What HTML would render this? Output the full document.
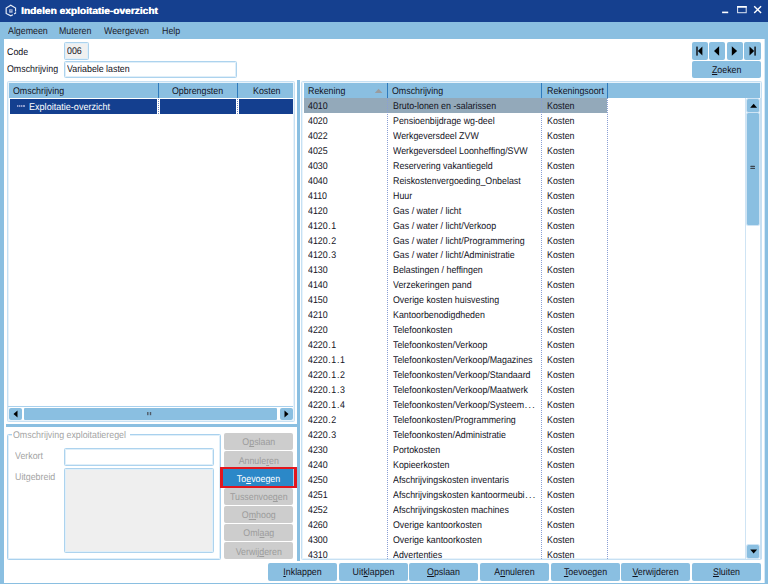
<!DOCTYPE html>
<html><head><meta charset="utf-8"><style>
html,body{margin:0;padding:0;width:768px;height:584px;overflow:hidden;background:#fff;position:relative}
div{position:absolute;box-sizing:content-box}
.t{font-family:"Liberation Sans",sans-serif;font-size:9.75px;line-height:11px;color:#12121c;white-space:nowrap;transform:scaleX(0.906);transform-origin:0 0;text-rendering:geometricPrecision}
.b{background:#8abfe1;border-radius:2px}
.bl{left:0;right:0;text-align:center;font-family:"Liberation Sans",sans-serif;font-size:9.75px;line-height:11px;color:#12121c;white-space:nowrap;transform:scaleX(0.906);text-rendering:geometricPrecision}
.dis{background:#cdcdcd}
.dis .bl{color:#9c9c9c}
.box{border:1px solid #add3ee;border-radius:1.5px;box-shadow:inset 0 0 0 1px #e0eff9}
u{text-decoration:underline;text-decoration-skip-ink:none}
.dot{margin:0 0.7px}
</style></head><body>
<div style="left:0;top:0;width:768px;height:22px;background:#15408f"></div>
<svg style="position:absolute;left:0;top:0" width="22" height="22" viewBox="0 0 22 22">
<path d="M12.9 14.7 L10.78 15.87 L6.16 13.4 L6.16 8.01 L10.78 5.24 L15.56 8.01 L15.56 11.4" fill="none" stroke="#e8edf7" stroke-width="1.15"/>
<path d="M14.1 13.95 L15.56 13.1 L15.56 12.2" fill="none" stroke="#e8edf7" stroke-width="1.15"/>
<rect x="9.1" y="9.25" width="3.5" height="3.5" fill="#a3b3d8"/>
<path d="M9.9 10.1 L10.85 10.8 L11.8 10.1" fill="none" stroke="#4a68a8" stroke-width="0.6"/>
</svg>
<div class="t" style="left:21px;top:5.82px;font-weight:bold;color:#fff;transform:scaleX(1.043);text-shadow:0.3px 0 0 #fff">Indelen exploitatie-overzicht</div>
<svg style="position:absolute;left:716px;top:0" width="52" height="22" viewBox="716 0 52 22">
<rect x="722.1" y="11.6" width="6.1" height="1.6" fill="#fff"/>
<rect x="737.6" y="6.6" width="8.6" height="6.1" fill="none" stroke="#dfe6f3" stroke-width="1"/>
<rect x="737.1" y="6" width="9.6" height="1.7" fill="#fff"/>
<path d="M754.2 6.3 L761.1 12.9 M761.1 6.3 L754.2 12.9" stroke="#fff" stroke-width="1.4"/>
</svg>
<div style="left:0;top:22px;width:768px;height:17px;background:#8abfe1"></div>
<div class="t" style="left:8px;top:25.82px;color:#1b1b2a;">Algemeen</div>
<div class="t" style="left:58.9px;top:25.82px;color:#1b1b2a;">Muteren</div>
<div class="t" style="left:103.9px;top:25.82px;color:#1b1b2a;">Weergeven</div>
<div class="t" style="left:161.7px;top:25.82px;color:#1b1b2a;">Help</div>
<div style="left:0;top:39px;width:4px;height:545px;background:#8abfe1"></div>
<div style="left:765px;top:39px;width:3px;height:545px;background:#8abfe1"></div>
<div style="left:764px;top:39px;width:1px;height:545px;background:#d7e9f5"></div>
<div style="left:0;top:583px;width:768px;height:1px;background:#8abfe1"></div>
<div class="t" style="left:7.25px;top:46.62px;">Code</div>
<div class="box" style="left:64px;top:42px;width:23px;height:16px;background:#f0f0f0"></div>
<div class="t" style="left:67.2px;top:46.22px;">006</div>
<div class="t" style="left:7.25px;top:64.42px;">Omschrijving</div>
<div class="box" style="left:64px;top:61px;width:171px;height:15px;background:#fff"></div>
<div class="t" style="left:67.4px;top:64.12px;">Variabele lasten</div>
<div class="b" style="left:691.6px;top:42.2px;width:16.2px;height:17.4px"></div>
<div class="b" style="left:709.1px;top:42.2px;width:16px;height:17.4px"></div>
<div class="b" style="left:726.9px;top:42.2px;width:15.9px;height:17.4px"></div>
<div class="b" style="left:744.2px;top:42.2px;width:16.6px;height:17.4px"></div>
<svg style="position:absolute;left:680px;top:40px" width="88" height="22" viewBox="680 40 88 22">
<rect x="696.1" y="46.6" width="1.8" height="9" fill="#26313b"/><path d="M702.4 46.5 L697.9 51 L702.4 55.5 Z" fill="#000"/>
<path d="M719.1 46.3 L714 51 L719.1 55.7 Z" fill="#000"/>
<path d="M731.8 46.3 L737.1 51 L731.8 55.7 Z" fill="#000"/>
<path d="M749.5 46.5 L754.2 51 L749.5 55.5 Z" fill="#000"/><rect x="754.2" y="46.6" width="1.8" height="9" fill="#26313b"/>
</svg>
<div class="b" style="left:691.6px;top:61.1px;width:69.4px;height:16.7px;"><div class="bl" style="top:3.82px;"><u>Z</u>oeken</div></div>
<div class="box" style="left:7px;top:81px;width:286px;height:339px;background:#fff;border-color:#c6e0f3;box-shadow:inset 0 0 0 1px #e8f3fb"></div>
<div style="left:9px;top:83px;width:284px;height:15px;background:#8abfe1"></div>
<div style="left:158px;top:83px;width:1px;height:15px;background:#2f7bbd"></div>
<div style="left:237px;top:83px;width:1px;height:15px;background:#2f7bbd"></div>
<div class="t" style="left:13px;top:86.02px;">Omschrijving</div>
<div class="t" style="left:172px;top:86.02px;">Opbrengsten</div>
<div class="t" style="left:253px;top:86.02px;">Kosten</div>
<div style="left:10px;top:99px;width:147px;height:14.5px;background:#143f8f"></div>
<div style="left:160px;top:99px;width:76px;height:14.5px;background:#143f8f"></div>
<div style="left:239px;top:99px;width:54px;height:14.5px;background:#143f8f"></div>
<div style="left:16.8px;top:105.4px;width:8.4px;height:1.2px;background:repeating-linear-gradient(90deg,#8d9dce 0 1.3px,#4a64a8 1.3px 2.1px)"></div>
<div class="t" style="left:29px;top:102.22px;color:#fff;transform:scaleX(0.93)">Exploitatie-overzicht</div>
<div style="left:158px;top:99px;width:0;height:14.5px;border-left:1px dotted #6f86c0"></div>
<div style="left:237px;top:99px;width:0;height:14.5px;border-left:1px dotted #6f86c0"></div>
<div style="left:8px;top:406px;width:285px;height:1px;background:#a9d1ee"></div>
<div class="b" style="left:9px;top:408px;width:13px;height:12px"></div>
<div class="b" style="left:23.5px;top:408px;width:253px;height:12px;border-radius:1px"></div>
<div class="b" style="left:280px;top:408px;width:13px;height:12px"></div>
<svg style="position:absolute;left:0;top:400px" width="300" height="25" viewBox="0 400 300 25">
<path d="M17.5 410.5 L13.5 414 L17.5 417.5 Z" fill="#000"/>
<path d="M284.5 410.5 L288.5 414 L284.5 417.5 Z" fill="#000"/>
<rect x="147.1" y="412" width="1.4" height="3.2" fill="#4f5a66"/><rect x="149.8" y="412" width="1.4" height="3.2" fill="#4f5a66"/>
</svg>
<div style="left:6px;top:424px;width:291px;height:3px;background:#8abfe1"></div>
<div style="left:297px;top:80px;width:3px;height:481px;background:#8abfe1"></div>
<div class="box" style="left:7.3px;top:433.5px;width:212px;height:124.5px;border-color:#a9d1ee;border-width:1.3px"></div>
<div style="left:12.3px;top:430px;width:118px;height:8px;background:#fff"></div>
<div class="t" style="left:12.85px;top:429.62px;color:#a4a4a4;">Omschrijving exploitatieregel</div>
<div class="t" style="left:14.9px;top:451.42px;color:#a4a4a4;">Verkort</div>
<div class="box" style="left:64px;top:448px;width:148px;height:16px;background:#fff"></div>
<div class="t" style="left:14.9px;top:471.72px;color:#a4a4a4;">Uitgebreid</div>
<div class="box" style="left:64px;top:467.5px;width:148px;height:83px;background:#efefef"></div>
<div class="b dis" style="left:223.6px;top:433.2px;width:69.6px;height:17px;"><div class="bl" style="top:4.22px;">O<u>p</u>slaan</div></div>
<div class="b dis" style="left:223.6px;top:451.4px;width:69.6px;height:17px;"><div class="bl" style="top:4.22px;">Annule<u>r</u>en</div></div>
<div style="left:220px;top:467px;width:71px;height:17px;border-style:solid;border-color:#e3161d;border-width:2px 3px"></div>
<div class="b" style="left:223.2px;top:469.4px;width:71px;height:16.5px;background:#2b88c8;border-radius:0;box-shadow:inset -1px 0 0 #9fd0ee"><div class="bl" style="top:4.32px;color:#fff;">To<u>e</u>voegen</div></div>
<div class="b dis" style="left:223.6px;top:487.8px;width:69.6px;height:17px;"><div class="bl" style="top:4.22px;">Tussenvoe<u>g</u>en</div></div>
<div class="b dis" style="left:223.6px;top:506.0px;width:69.6px;height:17px;"><div class="bl" style="top:4.22px;">O<u>m</u>hoog</div></div>
<div class="b dis" style="left:223.6px;top:524.2px;width:69.6px;height:17px;"><div class="bl" style="top:4.22px;">Oml<u>a</u>ag</div></div>
<div class="b dis" style="left:223.6px;top:542.4px;width:69.6px;height:17px;"><div class="bl" style="top:4.22px;">Verwij<u>d</u>eren</div></div>
<div class="box" style="left:301px;top:81px;width:459px;height:477px;background:#fff;border-color:#c6e0f3;box-shadow:inset 0 0 0 1px #e8f3fb"></div>
<div style="left:304px;top:83px;width:456px;height:15px;background:#8abfe1"></div>
<div style="left:387px;top:83px;width:1px;height:15px;background:#2f7bbd"></div>
<div style="left:541px;top:83px;width:1px;height:15px;background:#2f7bbd"></div>
<div style="left:607px;top:83px;width:1px;height:15px;background:#2f7bbd"></div>
<div class="t" style="left:308px;top:86.02px;">Rekening</div>
<svg style="position:absolute;left:370px;top:85px" width="16" height="10" viewBox="370 85 16 10"><path d="M374.8 92.9 L378.6 88.8 L382.4 92.9 Z" fill="#9a9c9e"/></svg>
<div class="t" style="left:392px;top:86.02px;">Omschrijving</div>
<div class="t" style="left:547px;top:86.02px;">Rekeningsoort</div>
<div style="left:304px;top:98px;width:303px;height:15px;background:#93a9ba"></div>
<div style="left:303px;top:98px;width:443px;height:461px;overflow:hidden">
<div class="t" style="left:5px;top:2.92px;">4010</div>
<div class="t" style="left:89.7px;top:2.92px;">Bruto-lonen en -salarissen</div>
<div class="t" style="left:244px;top:2.92px;">Kosten</div>
<div class="t" style="left:5px;top:17.88px;">4020</div>
<div class="t" style="left:89.7px;top:17.88px;">Pensioenbijdrage wg-deel</div>
<div class="t" style="left:244px;top:17.88px;">Kosten</div>
<div class="t" style="left:5px;top:32.83px;">4022</div>
<div class="t" style="left:89.7px;top:32.83px;">Werkgeversdeel ZVW</div>
<div class="t" style="left:244px;top:32.83px;">Kosten</div>
<div class="t" style="left:5px;top:47.79px;">4025</div>
<div class="t" style="left:89.7px;top:47.79px;">Werkgeversdeel Loonheffing/SVW</div>
<div class="t" style="left:244px;top:47.79px;">Kosten</div>
<div class="t" style="left:5px;top:62.75px;">4030</div>
<div class="t" style="left:89.7px;top:62.75px;">Reservering vakantiegeld</div>
<div class="t" style="left:244px;top:62.75px;">Kosten</div>
<div class="t" style="left:5px;top:77.7px;">4040</div>
<div class="t" style="left:89.7px;top:77.7px;">Reiskostenvergoeding_Onbelast</div>
<div class="t" style="left:244px;top:77.7px;">Kosten</div>
<div class="t" style="left:5px;top:92.66px;">4110</div>
<div class="t" style="left:89.7px;top:92.66px;">Huur</div>
<div class="t" style="left:244px;top:92.66px;">Kosten</div>
<div class="t" style="left:5px;top:107.61px;">4120</div>
<div class="t" style="left:89.7px;top:107.61px;">Gas / water / licht</div>
<div class="t" style="left:244px;top:107.61px;">Kosten</div>
<div class="t" style="left:5px;top:122.57px;">4120<span class="dot">.</span>1</div>
<div class="t" style="left:89.7px;top:122.57px;">Gas / water / licht/Verkoop</div>
<div class="t" style="left:244px;top:122.57px;">Kosten</div>
<div class="t" style="left:5px;top:137.53px;">4120<span class="dot">.</span>2</div>
<div class="t" style="left:89.7px;top:137.53px;">Gas / water / licht/Programmering</div>
<div class="t" style="left:244px;top:137.53px;">Kosten</div>
<div class="t" style="left:5px;top:152.48px;">4120<span class="dot">.</span>3</div>
<div class="t" style="left:89.7px;top:152.48px;">Gas / water / licht/Administratie</div>
<div class="t" style="left:244px;top:152.48px;">Kosten</div>
<div class="t" style="left:5px;top:167.44px;">4130</div>
<div class="t" style="left:89.7px;top:167.44px;">Belastingen / heffingen</div>
<div class="t" style="left:244px;top:167.44px;">Kosten</div>
<div class="t" style="left:5px;top:182.39px;">4140</div>
<div class="t" style="left:89.7px;top:182.39px;">Verzekeringen pand</div>
<div class="t" style="left:244px;top:182.39px;">Kosten</div>
<div class="t" style="left:5px;top:197.35px;">4150</div>
<div class="t" style="left:89.7px;top:197.35px;">Overige kosten huisvesting</div>
<div class="t" style="left:244px;top:197.35px;">Kosten</div>
<div class="t" style="left:5px;top:212.31px;">4210</div>
<div class="t" style="left:89.7px;top:212.31px;">Kantoorbenodigdheden</div>
<div class="t" style="left:244px;top:212.31px;">Kosten</div>
<div class="t" style="left:5px;top:227.26px;">4220</div>
<div class="t" style="left:89.7px;top:227.26px;">Telefoonkosten</div>
<div class="t" style="left:244px;top:227.26px;">Kosten</div>
<div class="t" style="left:5px;top:242.22px;">4220<span class="dot">.</span>1</div>
<div class="t" style="left:89.7px;top:242.22px;">Telefoonkosten/Verkoop</div>
<div class="t" style="left:244px;top:242.22px;">Kosten</div>
<div class="t" style="left:5px;top:257.17px;">4220<span class="dot">.</span>1<span class="dot">.</span>1</div>
<div class="t" style="left:89.7px;top:257.17px;">Telefoonkosten/Verkoop/Magazines</div>
<div class="t" style="left:244px;top:257.17px;">Kosten</div>
<div class="t" style="left:5px;top:272.13px;">4220<span class="dot">.</span>1<span class="dot">.</span>2</div>
<div class="t" style="left:89.7px;top:272.13px;">Telefoonkosten/Verkoop/Standaard</div>
<div class="t" style="left:244px;top:272.13px;">Kosten</div>
<div class="t" style="left:5px;top:287.09px;">4220<span class="dot">.</span>1<span class="dot">.</span>3</div>
<div class="t" style="left:89.7px;top:287.09px;">Telefoonkosten/Verkoop/Maatwerk</div>
<div class="t" style="left:244px;top:287.09px;">Kosten</div>
<div class="t" style="left:5px;top:302.04px;">4220<span class="dot">.</span>1<span class="dot">.</span>4</div>
<div class="t" style="left:89.7px;top:302.04px;">Telefoonkosten/Verkoop/Systeem<span class="dot">.</span><span class="dot">.</span><span class="dot">.</span></div>
<div class="t" style="left:244px;top:302.04px;">Kosten</div>
<div class="t" style="left:5px;top:317.0px;">4220<span class="dot">.</span>2</div>
<div class="t" style="left:89.7px;top:317.0px;">Telefoonkosten/Programmering</div>
<div class="t" style="left:244px;top:317.0px;">Kosten</div>
<div class="t" style="left:5px;top:331.95px;">4220<span class="dot">.</span>3</div>
<div class="t" style="left:89.7px;top:331.95px;">Telefoonkosten/Administratie</div>
<div class="t" style="left:244px;top:331.95px;">Kosten</div>
<div class="t" style="left:5px;top:346.91px;">4230</div>
<div class="t" style="left:89.7px;top:346.91px;">Portokosten</div>
<div class="t" style="left:244px;top:346.91px;">Kosten</div>
<div class="t" style="left:5px;top:361.87px;">4240</div>
<div class="t" style="left:89.7px;top:361.87px;">Kopieerkosten</div>
<div class="t" style="left:244px;top:361.87px;">Kosten</div>
<div class="t" style="left:5px;top:376.82px;">4250</div>
<div class="t" style="left:89.7px;top:376.82px;">Afschrijvingskosten inventaris</div>
<div class="t" style="left:244px;top:376.82px;">Kosten</div>
<div class="t" style="left:5px;top:391.78px;">4251</div>
<div class="t" style="left:89.7px;top:391.78px;">Afschrijvingskosten kantoormeubi<span class="dot">.</span><span class="dot">.</span><span class="dot">.</span></div>
<div class="t" style="left:244px;top:391.78px;">Kosten</div>
<div class="t" style="left:5px;top:406.73px;">4252</div>
<div class="t" style="left:89.7px;top:406.73px;">Afschrijvingskosten machines</div>
<div class="t" style="left:244px;top:406.73px;">Kosten</div>
<div class="t" style="left:5px;top:421.69px;">4260</div>
<div class="t" style="left:89.7px;top:421.69px;">Overige kantoorkosten</div>
<div class="t" style="left:244px;top:421.69px;">Kosten</div>
<div class="t" style="left:5px;top:436.65px;">4300</div>
<div class="t" style="left:89.7px;top:436.65px;">Overige kantoorkosten</div>
<div class="t" style="left:244px;top:436.65px;">Kosten</div>
<div class="t" style="left:5px;top:451.6px;">4310</div>
<div class="t" style="left:89.7px;top:451.6px;">Advertenties</div>
<div class="t" style="left:244px;top:451.6px;">Kosten</div>
</div>
<div style="left:387px;top:98px;width:0;height:461px;border-left:1px dotted #8a9fd4"></div>
<div style="left:541px;top:98px;width:0;height:461px;border-left:1px dotted #8a9fd4"></div>
<div style="left:607px;top:98px;width:0;height:461px;border-left:1px dotted #8a9fd4"></div>
<div style="left:745px;top:98px;width:14px;height:461px;border-left:1px solid #cfe4f4;border-right:2px solid #c8e0f2;background:#fff"></div>
<div class="b" style="left:747.1px;top:98.9px;width:12px;height:12.7px;border-radius:1.5px;box-shadow:0 0 0 1px #cfe4f4"></div>
<div class="b" style="left:747.1px;top:113px;width:12px;height:112px;border-radius:1.5px;box-shadow:0 0 0 1px #cfe4f4"></div>
<div class="b" style="left:747.2px;top:545.2px;width:12px;height:12.6px;border-radius:1.5px;box-shadow:0 0 0 1px #cfe4f4"></div>
<svg style="position:absolute;left:740px;top:95px" width="28" height="470" viewBox="740 95 28 470">
<path d="M750.2 107.8 L753.65 103.8 L757.1 107.8 Z" fill="#000"/>
<path d="M750.2 549.4 L753.65 553.4 L757.1 549.4 Z" fill="#000"/>
<rect x="750.3" y="165.7" width="4.7" height="1.3" rx="0.5" fill="#3d4650"/><rect x="750.3" y="167.8" width="4.7" height="1.3" rx="0.5" fill="#3d4650"/>
</svg>
<div class="b" style="left:268.0px;top:563.3px;width:69px;height:17.3px;"><div class="bl" style="top:4.12px;"><u>I</u>nklappen</div></div>
<div class="b" style="left:338.67px;top:563.3px;width:69px;height:17.3px;"><div class="bl" style="top:4.12px;">Uit<u>k</u>lappen</div></div>
<div class="b" style="left:409.34px;top:563.3px;width:69px;height:17.3px;"><div class="bl" style="top:4.12px;"><u>O</u>pslaan</div></div>
<div class="b" style="left:480.01px;top:563.3px;width:69px;height:17.3px;"><div class="bl" style="top:4.12px;">A<u>n</u>nuleren</div></div>
<div class="b" style="left:550.68px;top:563.3px;width:69px;height:17.3px;"><div class="bl" style="top:4.12px;"><u>T</u>oevoegen</div></div>
<div class="b" style="left:621.35px;top:563.3px;width:69px;height:17.3px;"><div class="bl" style="top:4.12px;"><u>V</u>erwijderen</div></div>
<div class="b" style="left:692.02px;top:563.3px;width:69px;height:17.3px;"><div class="bl" style="top:4.12px;"><u>S</u>luiten</div></div>
</body></html>
